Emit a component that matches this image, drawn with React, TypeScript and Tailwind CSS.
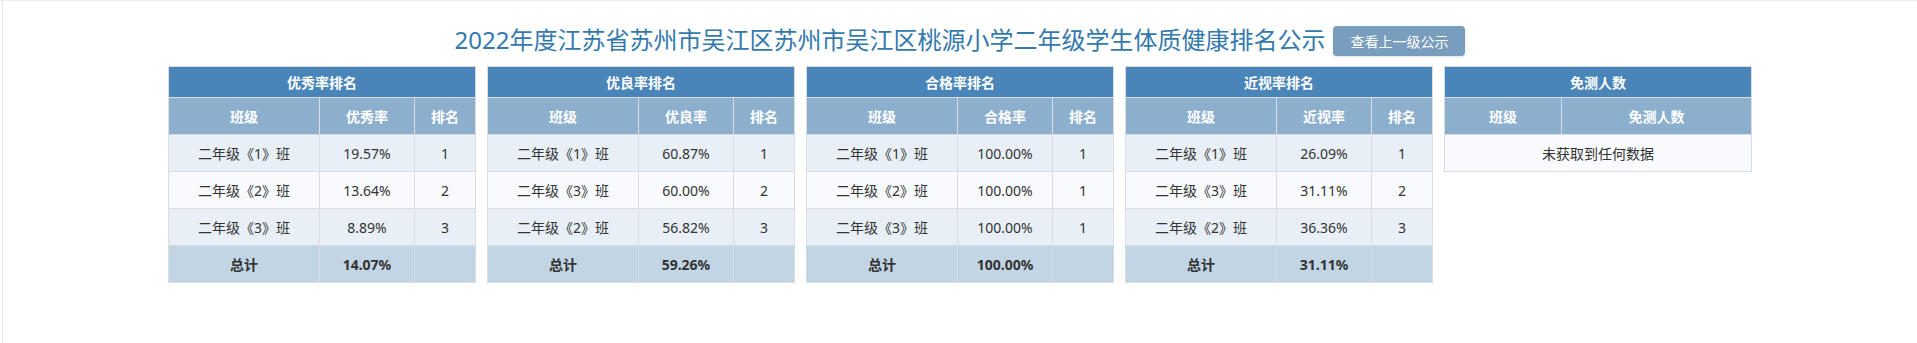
import React from "react";

type Row = { name: string; value: string; rank: string };

type RankTable = {
  title: string;
  rateLabel: string;
  rows: Row[];
  total: string;
};

const tables: RankTable[] = [
  {
    title: "优秀率排名",
    rateLabel: "优秀率",
    rows: [
      { name: "二年级《1》班", value: "19.57%", rank: "1" },
      { name: "二年级《2》班", value: "13.64%", rank: "2" },
      { name: "二年级《3》班", value: "8.89%", rank: "3" },
    ],
    total: "14.07%",
  },
  {
    title: "优良率排名",
    rateLabel: "优良率",
    rows: [
      { name: "二年级《1》班", value: "60.87%", rank: "1" },
      { name: "二年级《3》班", value: "60.00%", rank: "2" },
      { name: "二年级《2》班", value: "56.82%", rank: "3" },
    ],
    total: "59.26%",
  },
  {
    title: "合格率排名",
    rateLabel: "合格率",
    rows: [
      { name: "二年级《1》班", value: "100.00%", rank: "1" },
      { name: "二年级《2》班", value: "100.00%", rank: "1" },
      { name: "二年级《3》班", value: "100.00%", rank: "1" },
    ],
    total: "100.00%",
  },
  {
    title: "近视率排名",
    rateLabel: "近视率",
    rows: [
      { name: "二年级《1》班", value: "26.09%", rank: "1" },
      { name: "二年级《3》班", value: "31.11%", rank: "2" },
      { name: "二年级《2》班", value: "36.36%", rank: "3" },
    ],
    total: "31.11%",
  },
];

const cell = "border border-[#d9dde2] text-center align-middle p-0";

function RankingTable({ data }: { data: RankTable }) {
  return (
    <table className="w-[307px] table-fixed border-collapse text-[14px]">
      <colgroup>
        <col className="w-[151px]" />
        <col className="w-[95px]" />
        <col className="w-[61px]" />
      </colgroup>
      <thead>
        <tr className="h-[31px] bg-[#4985b8] text-white font-bold">
          <th colSpan={3} className={cell}>
            {data.title}
          </th>
        </tr>
        <tr className="h-[37px] bg-[#8cafce] text-white font-bold">
          <th className={cell}>班级</th>
          <th className={cell}>{data.rateLabel}</th>
          <th className={cell}>排名</th>
        </tr>
      </thead>
      <tbody className="text-[#333]">
        {data.rows.map((r, i) => (
          <tr
            key={i}
            className={`h-[37px] ${i % 2 === 0 ? "bg-[#e8eff7]" : "bg-[#f8fafd]"}`}
          >
            <td className={cell}>{r.name}</td>
            <td className={cell}>{r.value}</td>
            <td className={cell}>{r.rank}</td>
          </tr>
        ))}
        <tr className="h-[37px] bg-[#c2d5e5] font-bold text-[#333]">
          <td className={cell}>总计</td>
          <td className={cell}>{data.total}</td>
          <td className={cell}></td>
        </tr>
      </tbody>
    </table>
  );
}

function ExemptTable() {
  return (
    <table className="w-[307px] table-fixed border-collapse text-[14px]">
      <colgroup>
        <col className="w-[117px]" />
        <col className="w-[190px]" />
      </colgroup>
      <thead>
        <tr className="h-[31px] bg-[#4985b8] text-white font-bold">
          <th colSpan={2} className={cell}>
            免测人数
          </th>
        </tr>
        <tr className="h-[37px] bg-[#8cafce] text-white font-bold">
          <th className={cell}>班级</th>
          <th className={cell}>免测人数</th>
        </tr>
      </thead>
      <tbody>
        <tr className="h-[37px] bg-[#f8fafd] text-[#333]">
          <td colSpan={2} className={cell}>
            未获取到任何数据
          </td>
        </tr>
      </tbody>
    </table>
  );
}

export default function App() {
  return (
    <div
      className="min-h-[343px] bg-white border-t border-[#ebebeb]"
      style={{ fontFamily: '"Noto Sans", "Noto Sans CJK SC", sans-serif' }}
    >
      <div className="ml-[2px] min-h-[342px] border-l border-[#e6e6e6]">
        <div className="flex items-center justify-center gap-[8px] pt-[23px]">
          <h3 className="text-[24px] leading-[30px] text-[#3479ad] font-normal">
            2022年度江苏省苏州市吴江区苏州市吴江区桃源小学二年级学生体质健康排名公示
          </h3>
          <button className="h-[30px] px-[17px] rounded-[4px] bg-[#789dbd] text-white text-[14px] shadow-sm mt-[2px]">
            查看上一级公示
          </button>
        </div>
        <div className="flex justify-center items-start gap-[11px] mt-[10px]">
          {tables.map((t) => (
            <RankingTable key={t.title} data={t} />
          ))}
          <ExemptTable />
        </div>
      </div>
    </div>
  );
}
